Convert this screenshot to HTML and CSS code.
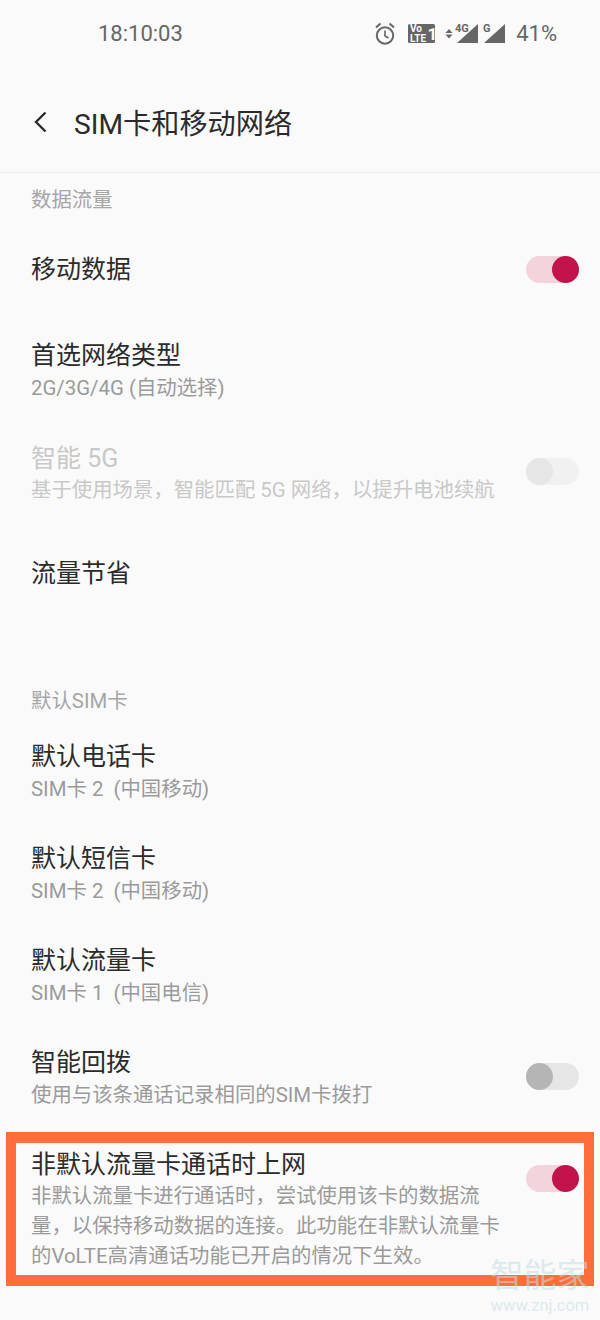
FILE: index.html
```html
<!DOCTYPE html>
<html lang="zh-CN">
<head>
    <meta charset="UTF-8">
    <title>SIM卡和移动网络</title>
    <link rel="stylesheet" href="styles.css">
</head>
<body>
    <div class="phone">
        <div class="status-bar">
            <span class="time">18:10:03</span>
            <div class="status-right">
                <svg class="status-icons" width="130" height="24" viewBox="0 0 130 24">
                    <circle cx="10" cy="14.5" r="8.2" fill="none" stroke="#666" stroke-width="2"/>
                    <path d="M10 9.5V15L13.5 17" fill="none" stroke="#666" stroke-width="1.6"/>
                    <path d="M1 6.5L5.5 2.5M19 6.5L14.5 2.5" fill="none" stroke="#666" stroke-width="2"/>
                    <rect x="33" y="3" width="27" height="19" rx="1.5" fill="#666"/>
                    <text x="35" y="11" class="volte">Vo</text>
                    <text x="35" y="20.5" class="volte">LTE</text>
                    <text x="52.5" y="19" class="volte-num">1</text>
                    <path d="M74 8L77.5 12H70.5ZM74 17.5L70.5 13.5H77.5Z" fill="#666"/>
                    <text x="80" y="11" class="net">4G</text>
                    <path d="M103 3V22H82Z" fill="#666"/>
                    <text x="108" y="11" class="net">G</text>
                    <path d="M130 3V22H109Z" fill="#666"/>
                </svg>
                <span class="battery">41%</span>
            </div>
        </div>

        <div class="title-bar">
            <svg class="back" width="14" height="22" viewBox="0 0 14 22">
                <path d="M12.5 1.5L3 11L12.5 20.5" fill="none" stroke="#2b2b2b" stroke-width="2.4"/>
            </svg>
            <h1>SIM卡和移动网络</h1>
        </div>

        <div class="section-head first">数据流量</div>
        <div class="row">
            <div class="row-text low"><div class="row-title">移动数据</div></div>
            <div class="switch on"></div>
        </div>
        <div class="row">
            <div class="row-text">
                <div class="row-title">首选网络类型</div>
                <div class="row-sub">2G/3G/4G (自动选择)</div>
            </div>
        </div>
        <div class="row disabled">
            <div class="row-text">
                <div class="row-title">智能 5G</div>
                <div class="row-sub">基于使用场景，智能匹配 5G 网络，以提升电池续航</div>
            </div>
            <div class="switch dim"></div>
        </div>
        <div class="row short">
            <div class="row-text"><div class="row-title">流量节省</div></div>
        </div>

        <div class="section-head second">默认SIM卡</div>
        <div class="row">
            <div class="row-text">
                <div class="row-title">默认电话卡</div>
                <div class="row-sub">SIM卡 2 &nbsp;(中国移动)</div>
            </div>
        </div>
        <div class="row">
            <div class="row-text">
                <div class="row-title">默认短信卡</div>
                <div class="row-sub">SIM卡 2 &nbsp;(中国移动)</div>
            </div>
        </div>
        <div class="row">
            <div class="row-text">
                <div class="row-title">默认流量卡</div>
                <div class="row-sub">SIM卡 1 &nbsp;(中国电信)</div>
            </div>
        </div>
        <div class="row">
            <div class="row-text">
                <div class="row-title">智能回拨</div>
                <div class="row-sub">使用与该条通话记录相同的SIM卡拨打</div>
            </div>
            <div class="switch off"></div>
        </div>

        <div class="highlight">
            <div class="highlight-text">
                <div class="row-title">非默认流量卡通话时上网</div>
                <div class="row-sub long">非默认流量卡进行通话时，尝试使用该卡的数据流量，以保持移动数据的连接。此功能在非默认流量卡的VoLTE高清通话功能已开启的情况下生效。</div>
            </div>
            <div class="switch on"></div>
        </div>

        <div class="watermark">
            <div class="wm-name">智能家</div>
            <div class="wm-url">www.znj.com</div>
        </div>
    </div>
</body>
</html>
```

FILE: styles.css
```css
body {
    margin: 0;
    background-color: #fafafa;
    font-family: 'Roboto', 'Noto Sans CJK SC', sans-serif;
}
.phone {
    position: relative;
    width: 600px;
    height: 1320px;
    overflow: hidden;
    background-color: #fafafa;
}
.status-bar {
    height: 66px;
    display: flex;
    justify-content: space-between;
    align-items: center;
    padding: 0 43px 0 98px;
    color: #666;
    font-size: 22px;
}
.status-right {
    display: flex;
    align-items: center;
    gap: 11px;
}
.status-icons {
    display: block;
}
.volte {
    font-family: 'Roboto', sans-serif;
    font-size: 10px;
    font-weight: 700;
    fill: #fafafa;
}
.volte-num {
    font-family: 'Roboto', sans-serif;
    font-size: 17px;
    font-weight: 700;
    fill: #fafafa;
}
.net {
    font-family: 'Roboto', sans-serif;
    font-size: 11px;
    font-weight: 700;
    fill: #666;
}
.title-bar {
    height: 107px;
    box-sizing: border-box;
    display: flex;
    align-items: center;
    gap: 27px;
    padding: 4px 0 0 33px;
    border-bottom: 1px solid #eeeeee;
}
.back {
    display: block;
    margin-top: 2px;
}
h1 {
    margin: 0;
    font-size: 28.2px;
    font-weight: 400;
    color: #2b2b2b;
}
.section-head {
    padding-left: 31px;
    font-size: 20.4px;
    line-height: 30px;
    color: #a6a6a6;
}
.section-head.first {
    margin-top: 12px;
    margin-bottom: 3px;
}
.section-head.second {
    margin-top: 64px;
    margin-bottom: 5px;
}
.row {
    height: 102px;
    box-sizing: border-box;
    display: flex;
    justify-content: space-between;
    align-items: center;
    padding: 0 21px 0 31px;
}
.row.short {
    height: 96px;
}
.row-text.low {
    margin-top: 2px;
}
.row-title {
    font-size: 25px;
    line-height: 34px;
    color: #2b2b2b;
}
.row-sub {
    font-size: 20.4px;
    line-height: 30px;
    color: #9a9a9a;
}
.row.disabled {
    height: 104px;
    padding-bottom: 2px;
}
.row.disabled .row-title {
    color: #c8c8c8;
}
.row.disabled .row-sub {
    line-height: 28px;
    color: #c8c8c8;
}
.switch {
    position: relative;
    flex: none;
    width: 53px;
    height: 27px;
    border-radius: 14px;
}
.switch::after {
    content: "";
    position: absolute;
    top: 0;
    width: 27px;
    height: 27px;
    border-radius: 50%;
}
.switch.on {
    background-color: #f3d3dc;
}
.switch.on::after {
    right: 0;
    background-color: #c2134a;
}
.switch.off {
    margin-top: -4px;
    background-color: #e6e6e6;
}
.switch.off::after {
    left: 0;
    background-color: #b5b5b5;
}
.switch.dim {
    margin-top: -3px;
    background-color: #f1f1f1;
}
.switch.dim::after {
    left: 0;
    background-color: #e6e6e6;
}
.highlight {
    height: 154px;
    box-sizing: border-box;
    margin: 3px 6px 0;
    border: solid #ff6d3c;
    border-width: 11px 10px;
    display: flex;
    justify-content: space-between;
    padding: 5px 5px 0 15px;
}
.highlight-text {
    width: 470px;
}
.highlight .switch {
    margin-top: 17px;
}
.row-sub.long {
    margin-top: -1px;
}
.watermark {
    position: absolute;
    left: 490px;
    top: 1258px;
    width: 100px;
    text-align: center;
    color: #c4dce4;
    opacity: 0.55;
}
.wm-name {
    font-size: 33px;
    line-height: 36px;
}
.wm-url {
    font-size: 16.5px;
    line-height: 20px;
    margin-top: 2px;
}
```
